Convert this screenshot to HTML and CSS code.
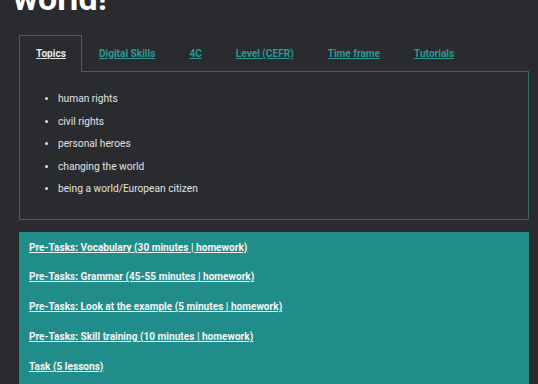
FILE: index.html
```html
<!DOCTYPE html>
<html lang="en">
<head>
    <meta charset="utf-8">
    <title>Change the world!</title>
    <link rel="stylesheet" href="styles.css">
</head>
<body>
    <div class="page">
        <h1 class="title">world!</h1>
        <div class="tabs">
            <ul class="tab-list">
                <li class="tab active"><a href="#topics">Topics</a></li>
                <li class="tab"><a href="#skills">Digital Skills</a></li>
                <li class="tab"><a href="#fourc">4C</a></li>
                <li class="tab"><a href="#level">Level (CEFR)</a></li>
                <li class="tab"><a href="#time">Time frame</a></li>
                <li class="tab"><a href="#tutorials">Tutorials</a></li>
            </ul>
            <div class="tab-panel" id="topics">
                <ul class="topic-list">
                    <li>human rights</li>
                    <li>civil rights</li>
                    <li>personal heroes</li>
                    <li>changing the world</li>
                    <li>being a world/European citizen</li>
                </ul>
            </div>
        </div>
        <div class="tasks">
            <a href="#vocabulary">Pre-Tasks: Vocabulary (30 minutes | homework)</a>
            <a href="#grammar">Pre-Tasks: Grammar (45-55 minutes | homework)</a>
            <a href="#example">Pre-Tasks: Look at the example (5 minutes | homework)</a>
            <a href="#skill">Pre-Tasks: Skill training (10 minutes | homework)</a>
            <a href="#task">Task (5 lessons)</a>
        </div>
    </div>
</body>
</html>
```

FILE: styles.css
```css
body { margin: 0; background-color: #2a2b2e; font-family: Roboto, "Liberation Sans", sans-serif; color: #e2e2e2; overflow: hidden; }
.page { width: 510px; padding-left: 19px; }
.title { margin: -19px 0 20px -6px; font-size: 34px; line-height: 34px; font-weight: 700; color: #ffffff; }
.tab-list { display: flex; margin: 0; padding: 0; list-style: none; }
.tab { margin-bottom: -1px; border: 1px solid transparent; border-bottom: none; }
.tab a { display: block; padding: 0 16px; line-height: 35px; font-size: 10.1px; font-weight: 700; color: #2b9995; }
.tab.active { border-color: #2d6b69; background-color: #2a2b2e; }
.tab.active a { color: #e6e6e6; padding: 0 15px 0 16px; line-height: 36px; }
.tab-panel { border: 1px solid #2d6b69; padding: 16px 0 18px; }
.topic-list { margin: 0; padding-left: 38px; font-size: 10.2px; line-height: 22.5px; }
.tasks { margin-top: 12px; padding: 1px 10px 10px; background-color: #218d8a; }
.tasks a { display: block; line-height: 29.8px; font-size: 10.1px; font-weight: 700; color: #f4f4f4; }
```
